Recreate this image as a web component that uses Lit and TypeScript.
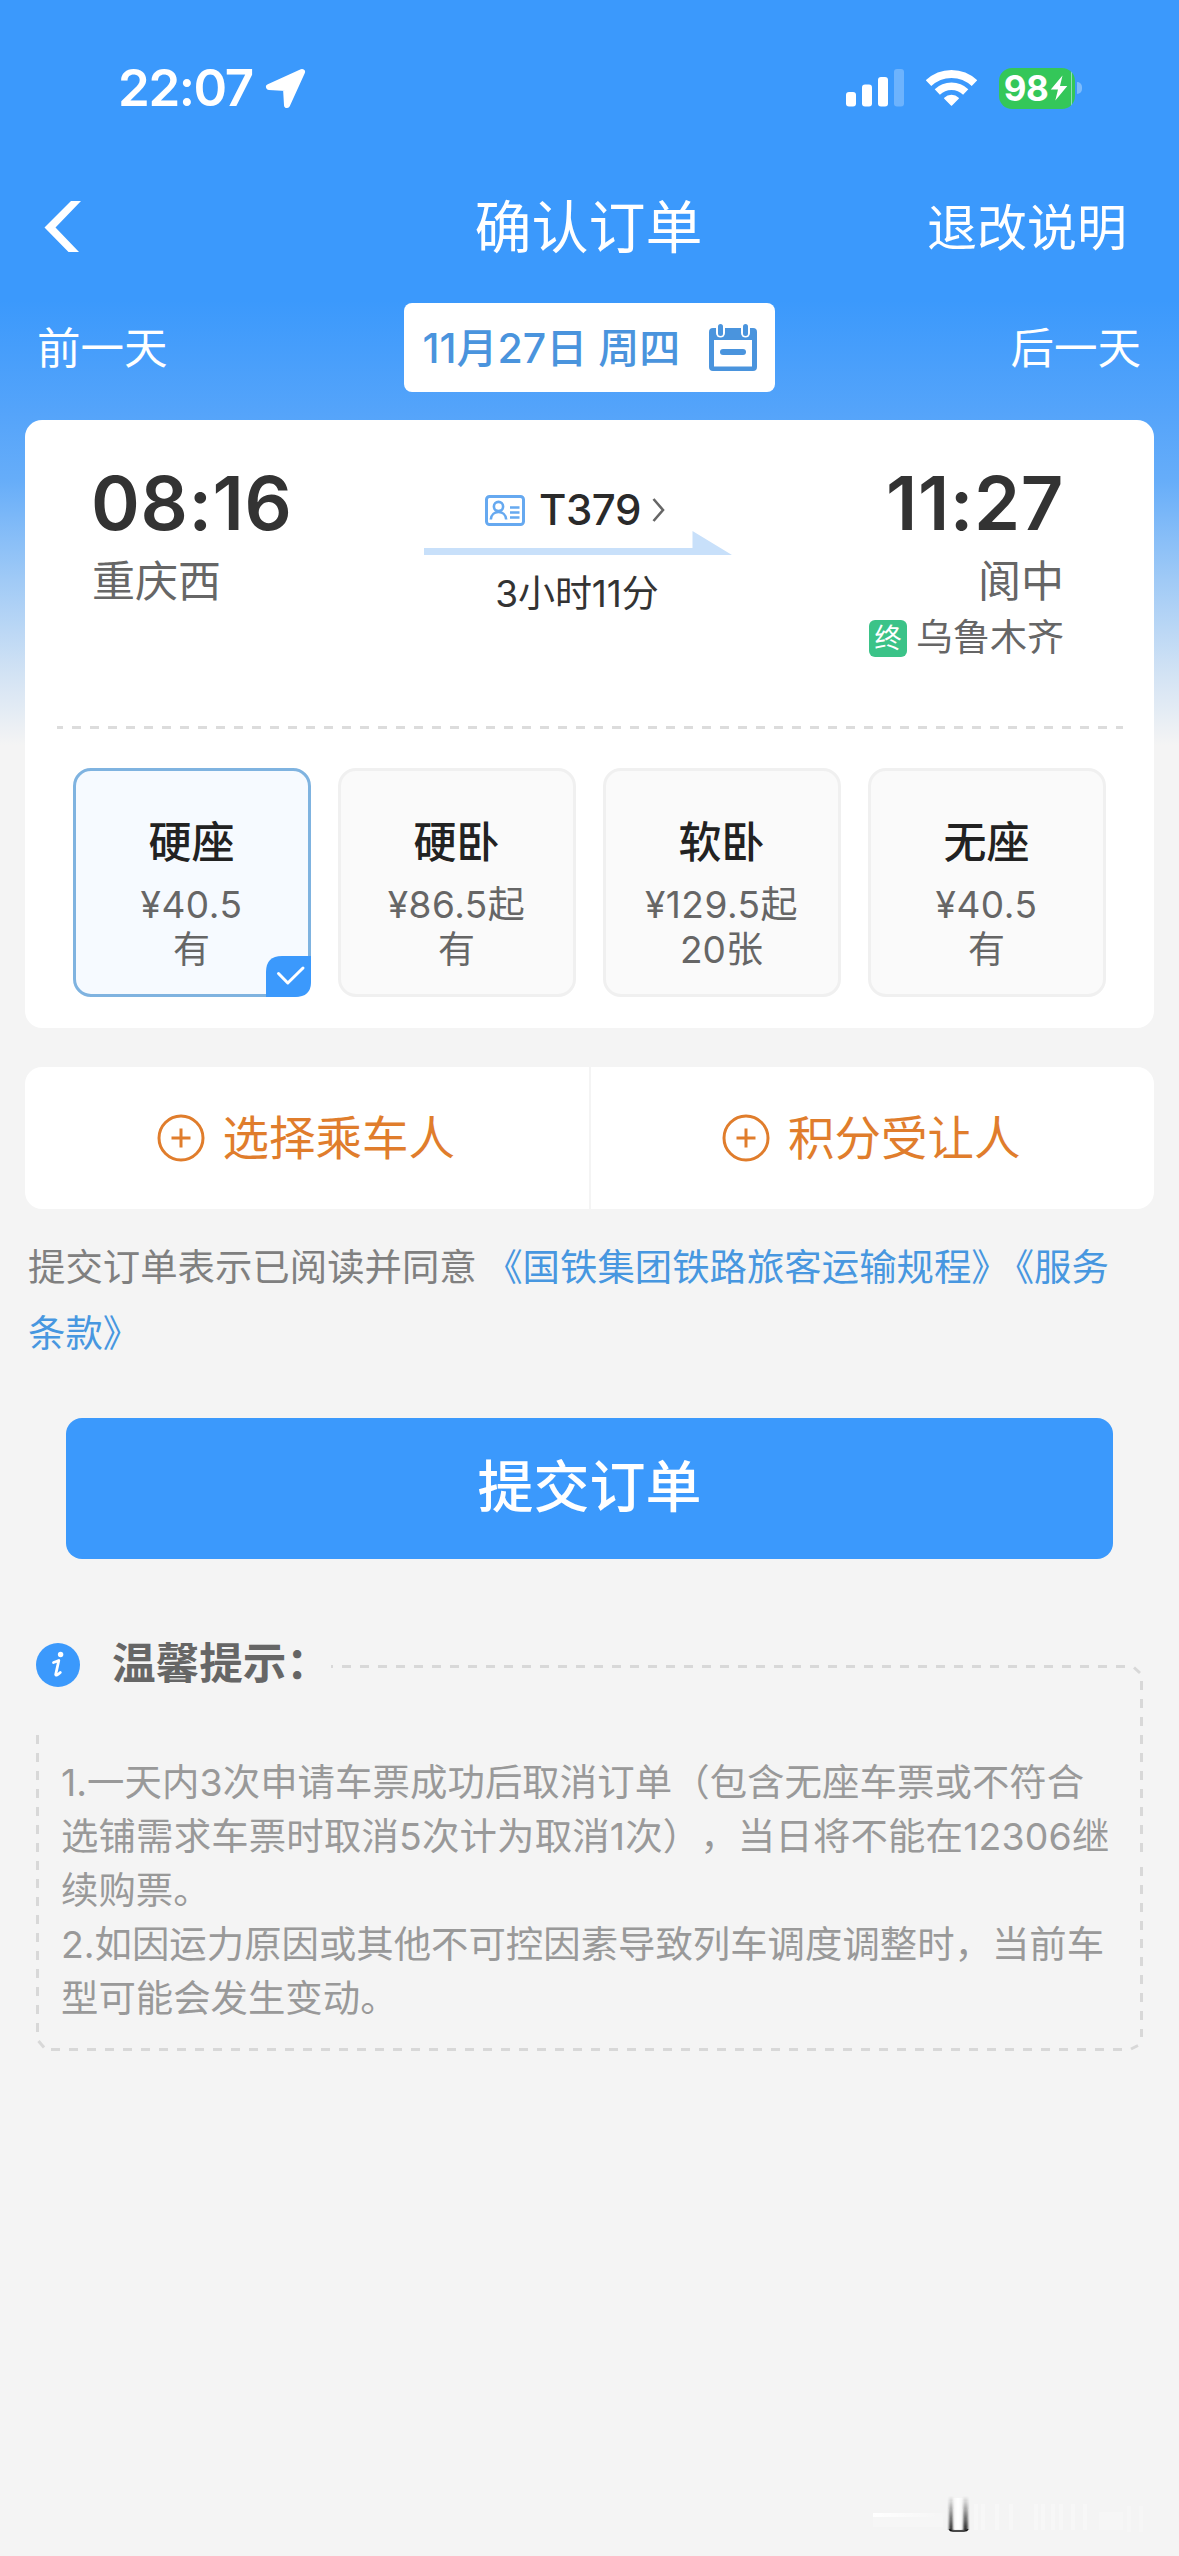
import { LitElement, html, css, svg } from "lit";
import { customElement, property, state } from "lit/decorators.js";
import { classMap } from "lit/directives/class-map.js";

interface Seat {
  name: string;
  price: string;
  left: string;
}

const SEATS: Seat[] = [
  { name: "硬座", price: "¥40.5", left: "有" },
  { name: "硬卧", price: "¥86.5起", left: "有" },
  { name: "软卧", price: "¥129.5起", left: "20张" },
  { name: "无座", price: "¥40.5", left: "有" },
];

interface TipLine {
  text: string;
  tracking: number;
}

const TIPS: TipLine[] = [
  { text: "1.一天内3次申请车票成功后取消订单（包含无座车票或不符合", tracking: 0.07 },
  { text: "选铺需求车票时取消5次计为取消1次），当日将不能在12306继", tracking: 0.17 },
  { text: "续购票。", tracking: 0 },
  { text: "2.如因运力原因或其他不可控因素导致列车调度调整时，当前车", tracking: 0 },
  { text: "型可能会发生变动。", tracking: 0 },
];

@customElement("status-bar")
class StatusBar extends LitElement {
  static styles = css`
    :host {
      display: flex;
      align-items: center;
      justify-content: space-between;
      height: 176px;
      padding: 0 97px 0 118px;
      color: #fff;
    }
    .left,
    .right {
      display: flex;
      align-items: center;
    }
    .time {
      font-size: 51px;
      font-weight: 600;
      line-height: 60px;
      letter-spacing: -1.4px;
    }
    .arrow {
      margin-left: 12px;
    }
    .wifi {
      margin-left: 22px;
    }
    .battery {
      display: flex;
      align-items: center;
      justify-content: center;
      gap: 2px;
      width: 76px;
      height: 41px;
      margin-left: 22px;
      border-radius: 13px;
      background: linear-gradient(90deg, #34c759 72px, #8fdcb8 72px, #8fdcb8 73px, #34c759 73px);
      box-sizing: border-box;
      padding-right: 2px;
    }
    .level {
      font-size: 35px;
      font-weight: 700;
      line-height: 41px;
      letter-spacing: -0.5px;
    }
    .nub {
      width: 5px;
      height: 12px;
      margin-left: 2px;
      border-radius: 0 5px 5px 0;
      background: #7dbcfd;
    }
  `;

  render() {
    return html`
      <div class="left">
        <span class="time">22:07</span>
        <svg class="arrow" width="41" height="41" viewBox="0 0 41 41">
          <path d="M37 4 L4 19 L21 20 L22 37 Z" fill="#fff" stroke="#fff" stroke-width="6" stroke-linejoin="round" />
        </svg>
      </div>
      <div class="right">
        <svg width="58" height="38" viewBox="0 0 58 38">
          <rect x="0" y="23" width="10" height="14.5" rx="3" fill="#fff" />
          <rect x="16" y="15.5" width="10" height="22" rx="3" fill="#fff" />
          <rect x="32" y="8" width="10" height="29.5" rx="3" fill="#fff" />
          <rect x="48" y="0" width="10" height="37.5" rx="3" fill="#6db3fd" />
        </svg>
        <svg class="wifi" width="51" height="38" viewBox="0 0 51 38">
          <path d="M2.5 14.2 A33.2 33.2 0 0 1 48.500 14.2" fill="none" stroke="#fff" stroke-width="8" />
          <path d="M11.300 23 A20.500 20.500 0 0 1 39.700 23" fill="none" stroke="#fff" stroke-width="7.500" />
          <path d="M25.500 36 L18.800 29.300 A9.500 9.500 0 0 1 32.200 29.300 Z" fill="#fff" stroke="#fff" stroke-width="1.500" stroke-linejoin="round" />
        </svg>
        <div class="battery">
          <span class="level">98</span>
          <svg width="18" height="26" viewBox="0 0 18 26">
            <path d="M12.500 0.500 L0.800 14.600 H8 L5.300 25.500 L17.300 11 H10 Z" fill="#fff" />
          </svg>
        </div>
        <div class="nub"></div>
      </div>
    `;
  }
}

@customElement("trip-summary")
class TripSummary extends LitElement {
  static styles = css`
    :host {
      display: flex;
      justify-content: space-between;
      height: 306px;
      box-sizing: border-box;
      padding: 43px 90px 0 67px;
      color: #333;
    }
    .end {
      display: flex;
      flex-direction: column;
      width: 250px;
    }
    .arrival {
      align-items: flex-end;
    }
    .time {
      font-size: 74px;
      font-weight: 600;
      line-height: 80px;
      letter-spacing: 0.6px;
      margin-left: -1px;
    }
    .station {
      margin-top: 8px;
      font-size: 43px;
      line-height: 60px;
      color: #666;
    }
    .terminal {
      display: flex;
      align-items: center;
      gap: 9px;
      margin-top: 4px;
      font-size: 37px;
      line-height: 46px;
      color: #666;
    }
    .tag {
      width: 38px;
      height: 37px;
      border-radius: 6px;
      background: #3bc388;
      color: #fff;
      font-size: 27px;
      line-height: 37px;
      text-align: center;
    }
    .middle {
      display: flex;
      flex-direction: column;
      align-items: center;
      width: 308px;
      padding-top: 26px;
    }
    .train {
      display: flex;
      align-items: center;
      height: 42px;
      margin-right: 6px;
    }
    .number {
      margin: 0 11px 0 14px;
      font-size: 42px;
      font-weight: 500;
      line-height: 42px;
      letter-spacing: -0.5px;
      color: #2a2a2a;
    }
    .line {
      display: block;
    }
    .duration {
      margin-top: 14px;
      font-size: 37px;
      line-height: 50px;
      margin-right: 2px;
      letter-spacing: -0.1px;
    }
  `;

  render() {
    return html`
      <div class="end">
        <div class="time">08:16</div>
        <div class="station">重庆西</div>
      </div>
      <div class="middle">
        <div class="train">
          <svg width="40" height="31" viewBox="0 0 40 31" fill="none" stroke="#66a9f0">
            <rect x="1.500" y="1.500" width="37" height="28" rx="3" stroke-width="3" />
            <circle cx="13.500" cy="11.500" r="4.600" stroke-width="2.600" />
            <path d="M5.800 24.500 C6.500 14.500 20.500 14.500 21.200 24.500" stroke-width="2.600" />
            <path d="M25 12.500 H34.500 M25 17.500 H34.500 M25 22.500 H34.500" stroke-width="2.400" />
          </svg>
          <span class="number">T379</span>
          <svg width="13" height="24" viewBox="0 0 13 24">
            <path d="M1.500 1 L11 12 L1.500 23" fill="none" stroke="#666" stroke-width="2.600" />
          </svg>
        </div>
        <svg class="line" width="308" height="24" viewBox="0 0 308 24">
          <path d="M0 17 H268.500 V0 L308 24 H0 Z" fill="#c8e0fa" />
        </svg>
        <div class="duration">3小时11分</div>
      </div>
      <div class="end arrival">
        <div class="time">11:27</div>
        <div class="station">阆中</div>
        <div class="terminal"><span class="tag">终</span><span>乌鲁木齐</span></div>
      </div>
    `;
  }
}

@customElement("seat-option")
class SeatOption extends LitElement {
  @property({ attribute: false }) seat!: Seat;
  @property({ type: Boolean }) selected = false;

  static styles = css`
    :host {
      display: block;
    }
    .seat {
      position: relative;
      height: 229px;
      box-sizing: border-box;
      padding: 41px 1px 0 0;
      border: 3px solid #f0f0f0;
      border-radius: 18px;
      background: #fafafa;
      text-align: center;
      color: #666;
      font-size: 37px;
      line-height: 45px;
    }
    .selected {
      border-color: #7fb3e0;
      background: #f6faff;
    }
    .name {
      margin-bottom: 10px;
      font-size: 43px;
      font-weight: 500;
      line-height: 60px;
      color: #222;
    }
    .price {
      letter-spacing: 0.5px;
    }
    .badge {
      position: absolute;
      right: -3px;
      bottom: -3px;
      display: block;
    }
  `;

  render() {
    return html`
      <div class=${classMap({ seat: true, selected: this.selected })}>
        <div class="name">${this.seat.name}</div>
        <div class="price">${this.seat.price}</div>
        <div>${this.seat.left}</div>
        ${this.selected
          ? html`<svg class="badge" width="45" height="41" viewBox="0 0 45 41">
              <path d="M0 41 V16 Q0 0 16 0 H45 V26 Q45 41 29 41 Z" fill="#3b99fc" />
              <path d="M12.500 17.500 L21.800 27 L37 12" fill="none" stroke="#fff" stroke-width="3" stroke-linecap="round" stroke-linejoin="round" />
            </svg>`
          : null}
      </div>
    `;
  }
}

@customElement("tips-panel")
class TipsPanel extends LitElement {
  static styles = css`
    :host {
      display: grid;
      margin: 76px 36px 0;
    }
    .frame,
    .content {
      grid-area: 1 / 1;
    }
    .frame {
      display: block;
    }
    .content {
      padding: 8px 0 0 0;
    }
    .head {
      display: flex;
      align-items: center;
      gap: 32px;
      height: 44px;
    }
    .title {
      font-size: 43.6px;
      font-weight: 700;
      line-height: 44px;
      padding-bottom: 2px;
      color: #666;
    }
    .lines {
      margin: 69px 0 0 25px;
      font-size: 37.4px;
      line-height: 54px;
      color: #999;
      white-space: nowrap;
      text-spacing-trim: space-all;
    }
  `;

  render() {
    return html`
      <svg class="frame" width="1107" height="420" viewBox="0 0 1107 420" fill="none" stroke="#d8d8d8" stroke-width="3">
        <path d="M295 31.500 H297 M306 31.500 H1092" stroke-dasharray="9 9" />
        <path d="M1098 32.500 L1104 38" />
        <path d="M1105.500 46 V218" stroke-dasharray="9 9" />
        <path d="M1105.500 232 V402" stroke-dasharray="9 9" />
        <path d="M1102 410.500 L1095 414" />
        <path d="M15 414.500 H1088" stroke-dasharray="9 9" />
        <path d="M2.500 406 L8 412.500" />
        <path d="M1.500 100 V398" stroke-dasharray="9 9" />
      </svg>
      <div class="content">
        <div class="head">
          <svg width="44" height="44" viewBox="0 0 44 44">
            <circle cx="22" cy="22" r="22" fill="#3b99fc" />
            <circle cx="24.600" cy="11.500" r="2.700" fill="#fff" />
            <path d="M17.500 19.500 Q20.500 18.500 22.800 17.500 L19.700 31.500 Q20 33.500 24.300 29.500" fill="none" stroke="#fff" stroke-width="2.800" stroke-linecap="round" stroke-linejoin="round" />
          </svg>
          <span class="title">温馨提示：</span>
        </div>
        <div class="lines">
          ${TIPS.map((line) => html`<div style="letter-spacing: ${line.tracking}px">${line.text}</div>`)}
        </div>
      </div>
    `;
  }
}

@customElement("app-root")
class AppRoot extends LitElement {
  @state() private selected = 0;

  static styles = css`
    :host {
      display: flex;
      flex-direction: column;
      width: 1179px;
      height: 2556px;
      overflow: hidden;
      font-family: Inter, "Noto Sans CJK SC", sans-serif;
      background: linear-gradient(
        180deg,
        #3b99fc 0,
        #3b99fc 300px,
        #55a4fa 415px,
        #66adf9 480px,
        #a0caf6 580px,
        #d3e3f4 675px,
        #f4f4f4 745px
      );
    }
    .nav {
      display: grid;
      grid-template-columns: 1fr auto 1fr;
      align-items: center;
      height: 104px;
      padding: 0 52px 0 44px;
      color: #fff;
    }
    .back {
      display: block;
      margin-bottom: 4px;
    }
    .title {
      font-size: 57px;
      line-height: 80px;
      padding-left: 6px;
    }
    .rules {
      justify-self: end;
      font-size: 50px;
      line-height: 60px;
    }
    .days {
      display: grid;
      grid-template-columns: 1fr auto 1fr;
      align-items: center;
      margin-top: 23px;
      padding: 0 38px 0 37px;
      font-size: 43.5px;
      line-height: 60px;
      color: #fff;
    }
    .next {
      justify-self: end;
    }
    .date {
      display: flex;
      align-items: center;
      justify-content: space-between;
      width: 371px;
      height: 89px;
      box-sizing: border-box;
      padding: 0 18px 0 19px;
      border-radius: 8px;
      background: #fff;
      color: #4a94dd;
      font-size: 41px;
      font-weight: 500;
      white-space: pre;
    }
    .trip {
      height: 608px;
      margin: 28px 25px 0;
      border-radius: 17px;
      background: #fff;
    }
    .divider {
      height: 3px;
      margin: 0 31px 0 32px;
      background: repeating-linear-gradient(90deg, #dcdcdc 0 6px, transparent 6px 15px, #dcdcdc 15px 18px);
    }
    .seats {
      display: grid;
      grid-template-columns: repeat(4, 238px);
      gap: 27px;
      margin: 39px 0 0 48px;
    }
    .adders {
      display: grid;
      grid-template-columns: 1fr 1fr;
      gap: 2px;
      height: 142px;
      margin: 39px 25px 0;
      border-radius: 17px;
      overflow: hidden;
    }
    .adder {
      display: flex;
      align-items: center;
      justify-content: center;
      gap: 18px;
      padding-right: 2px;
      background: #fff;
      color: #e07d2c;
      font-size: 46.5px;
      line-height: 60px;
    }
    .agreement {
      margin: 26px 20px 0 28px;
      font-size: 37.4px;
      line-height: 66px;
      color: #808080;
      white-space: nowrap;
      text-spacing-trim: space-all;
    }
    .link {
      margin-left: -2px;
      color: #4797e0;
    }
    .tight {
      letter-spacing: -12px;
    }
    .submit {
      height: 141px;
      margin: 51px 66px 0;
      border-radius: 16px;
      background: #3b99fc;
      color: #fff;
      font-size: 56px;
      font-weight: 500;
      line-height: 138px;
      text-align: center;
    }
    .mark {
      align-self: flex-end;
      display: block;
      margin: auto 24px 16px 0;
    }
  `;

  private adder(label: string) {
    return html`
      <div class="adder">
        <svg width="48" height="48" viewBox="0 0 48 48" fill="none" stroke="#e07d2c" stroke-width="3">
          <circle cx="24" cy="24" r="22" />
          <path d="M24 14.500 V33.500 M14.500 24 H33.500" />
        </svg>
        <span>${label}</span>
      </div>
    `;
  }

  render() {
    return html`
      <status-bar></status-bar>
      <div class="nav">
        <svg class="back" width="38" height="51" viewBox="0 0 38 51">
          <path d="M27 0 H37 L11.500 26.500 L35 51 H24.500 L0.500 26.500 Z" fill="#fff" />
        </svg>
        <div class="title">确认订单</div>
        <div class="rules">退改说明</div>
      </div>
      <div class="days">
        <div>前一天</div>
        <div class="date">
          <span>11月27日 周四</span>
          <svg width="48" height="49" viewBox="0 0 48 49">
            <path d="M4 5 H44 Q48 5 48 9 V44 Q48 48 44 48 H4 Q0 48 0 44 V9 Q0 5 4 5 Z M5 17 V43.500 H43 V17 Z" fill="#4a94dd" fill-rule="evenodd" />
            <rect x="7" y="0" width="9" height="14.500" rx="4.500" fill="#fff" />
            <rect x="32" y="0" width="9" height="14.500" rx="4.500" fill="#fff" />
            <rect x="9" y="1" width="5" height="12" rx="2.500" fill="#4a94dd" />
            <rect x="34" y="1" width="5" height="12" rx="2.500" fill="#4a94dd" />
            <rect x="11" y="26" width="26" height="6" rx="3" fill="#4a94dd" />
          </svg>
        </div>
        <div class="next">后一天</div>
      </div>
      <div class="trip">
        <trip-summary></trip-summary>
        <div class="divider"></div>
        <div class="seats">
          ${SEATS.map(
            (seat, i) => html`<seat-option
              .seat=${seat}
              ?selected=${i === this.selected}
              @click=${() => (this.selected = i)}
            ></seat-option>`
          )}
        </div>
      </div>
      <div class="adders">${this.adder("选择乘车人")}${this.adder("积分受让人")}</div>
      <div class="agreement">
        提交订单表示已阅读并同意 <span class="link">《国铁集团铁路旅客运输规程<span class="tight">》</span>《服务<br />条款》</span>
      </div>
      <div class="submit">提交订单</div>
      <tips-panel></tips-panel>
      <svg class="mark" width="284" height="44" viewBox="0 0 284 44">
        <defs>
          <linearGradient id="fade" x1="0" y1="0" x2="0" y2="1">
            <stop offset="0" stop-color="#222" stop-opacity="0" />
            <stop offset="1" stop-color="#222" stop-opacity="0.95" />
          </linearGradient>
          <linearGradient id="glow" x1="0" y1="0" x2="1" y2="0">
            <stop offset="0" stop-color="#fff" />
            <stop offset="1" stop-color="#fff" stop-opacity="0.1" />
          </linearGradient>
          <linearGradient id="core" x1="0" y1="0" x2="1" y2="0">
            <stop offset="0" stop-color="#fff" stop-opacity="0" />
            <stop offset="0.500" stop-color="#fff" />
            <stop offset="1" stop-color="#fff" stop-opacity="0" />
          </linearGradient>
          <filter id="soft" x="-50%" y="-10%" width="200%" height="120%"><feGaussianBlur stdDeviation="0.9 0.1" /></filter>
        </defs>
        <rect x="2" y="17" width="72" height="4" fill="url(#glow)" />
        <rect x="2" y="21" width="70" height="10" fill="#f6f6f6" />
        <g filter="url(#soft)">
          <rect x="78" y="0" width="4" height="34" fill="url(#fade)" />
          <rect x="92" y="0" width="5" height="34" fill="url(#fade)" />
        </g>
        <rect x="81" y="2" width="12" height="31" fill="url(#core)" />
        <path d="M78.500 33.300 Q79 35 82 35 H93 Q96 35 97 33.300" fill="none" stroke="#111" stroke-width="1.400" />
        ${[103, 110, 124, 138, 163, 170, 180, 188, 200, 212].map(
          (x) => svg`<rect x=${x} y="8" width="4" height="26" fill="#f7f7f7" />`
        )}
        <rect x="228" y="16" width="24" height="18" fill="#f6f6f6" />
        <rect x="256" y="10" width="4" height="26" fill="#f6f6f6" />
        <rect x="268" y="10" width="4" height="26" fill="#f6f6f6" />
      </svg>
    `;
  }
}
